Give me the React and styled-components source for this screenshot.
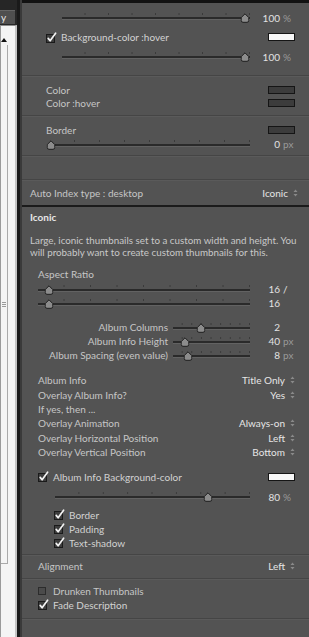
import React from 'react';
import styled, { createGlobalStyle } from 'styled-components';

const GlobalStyle = createGlobalStyle`
  html, body {
    margin: 0;
    padding: 0;
    background: #535353;
  }
  body {
    font-family: Lato, "Liberation Sans", sans-serif;
    font-size: 10px;
    color: #c8c8c8;
  }
`;

const Page = styled.div`
  display: flex;
  width: 309px;
  height: 637px;
  overflow: hidden;
`;

/* left window edge: list scrollbar and frame */
const Strip = styled.div`
  display: flex;
  flex-direction: column;
  width: 17px;
  background: #262626;
`;

const TabButton = styled.div`
  height: 14px;
  margin-top: 10px;
  width: 15px;
  background: #4f4f4f;
  border-top: 1px solid #666;
  box-sizing: border-box;
  color: #e8e8e8;
  font-size: 10px;
  line-height: 12px;
  overflow: hidden;
  padding-left: 1px;
`;

const ListArea = styled.div`
  flex: 1;
  display: flex;
  flex-direction: column;
  margin-top: 1px;
  background: #f4f4f4;
  border-top: 1px solid #8c8c8c;
  border-left: 1px solid #9a9a9a;
  border-right: 2px solid #c4c4c4;
  padding-top: 8px;
`;

const ScrollArrow = styled.div`
  display: flex;
  align-items: center;
  height: 11px;
  width: 7px;
`;

const ScrollThumb = styled.div`
  display: flex;
  align-items: center;
  justify-content: center;
  width: 6px;
  height: 518px;
  border-right: 1px solid #a9a9a9;
  border-bottom: 1px solid #a9a9a9;
`;

const Grip = styled.div`
  width: 4px;
  height: 5px;
  background: repeating-linear-gradient(to bottom, #9a9a9a 0, #9a9a9a 1px, transparent 1px, transparent 2px);
`;

const Frame = styled.div`
  width: 2px;
  background: #3a3a3a;
  border-left: 3px solid #1a1a1a;
`;

const Panel = styled.div`
  flex: 1;
  display: flex;
  flex-direction: column;
  background: #535353;
  border-top: 3px solid #121212;
`;

const Section = styled.div`
  display: flex;
  flex-direction: column;
  min-height: ${p => p.$minH || 0}px;
  padding: ${p => p.$pt || 0}px 0 ${p => p.$pb || 0}px;
  border-bottom: ${p => (p.$heavy ? '2px solid #1b1b1b' : '1px solid #454545')};
  box-shadow: ${p => (p.$heavy ? 'none' : '0 1px 0 #5a5a5a')};
`;

const Row = styled.div`
  display: flex;
  align-items: center;
  height: ${p => p.$h || 14}px;
  margin-top: ${p => p.$mt || 0}px;
  padding: 0 14px 0 ${p => (p.$indent ?? 16)}px;
  white-space: nowrap;
`;

const Label = styled.span`
  color: ${p => p.$color || '#c6c6c6'};
`;

const RightLabel = styled.span`
  width: ${p => p.$w}px;
  text-align: right;
  color: #c6c6c6;
  flex-shrink: 0;
`;

const Heading = styled.div`
  padding-left: 8px;
  margin-top: 4px;
  height: 13px;
  line-height: 13px;
  font-weight: 700;
  color: #e6e6e6;
`;

const Desc = styled.p`
  margin: 10px 0 0;
  padding-left: 8px;
  font-size: 9.8px;
  line-height: 12px;
  color: #c8c8c8;
  white-space: nowrap;
`;

const SliderWrap = styled.div`
  position: relative;
  flex: 1;
  height: 11px;
  margin-left: ${p => p.$ml || 0}px;
  margin-right: 7px;

  &::before {
    content: '';
    position: absolute;
    left: 0;
    right: 0;
    top: 1px;
    height: 2px;
    background-image: linear-gradient(to right, transparent calc(100% - 1px), #3a3a3a calc(100% - 1px));
    background-size: 12.5% 100%;
    background-repeat: repeat-x;
  }

  &::after {
    content: '';
    position: absolute;
    left: 0;
    right: 0;
    top: 5px;
    height: 2px;
    background: #2a2a2a;
    box-shadow: 0 1px 0 #626262;
  }
`;

const ThumbPos = styled.div`
  position: absolute;
  top: 1px;
  width: 9px;
  height: 10px;
  transform: translateX(-50%);
  z-index: 1;
  line-height: 0;
`;

const Value = styled.div`
  display: flex;
  width: 38px;
  flex-shrink: 0;
  color: #e2e2e2;
`;

const Num = styled.span`
  width: 23px;
  text-align: right;
`;

const Unit = styled.span`
  margin-left: 3px;
  color: ${p => p.$color || '#9a9a9a'};
`;

const Swatch = styled.div`
  margin-left: auto;
  width: 27px;
  height: 8px;
  box-sizing: border-box;
  border: 1px solid #151515;
  background: ${p => p.$fill};
`;

const Select = styled.div`
  margin-left: auto;
  margin-right: ${p => p.$mr || 0}px;
  display: flex;
  align-items: center;
  gap: 5px;
  color: #e6e6e6;
`;

const BoxSvg = styled.svg`
  flex-shrink: 0;
  margin-right: 4px;
`;

const Thumb = () => (
  <svg width="9" height="10" viewBox="0 0 9 10">
    <path
      d="M4.5 0.8 L8.3 4.6 V7.4 Q8.3 9.3 6.5 9.3 H2.5 Q0.7 9.3 0.7 7.4 V4.6 Z"
      fill="#8c8c8c"
      stroke="#1e1e1e"
      strokeWidth="1"
    />
  </svg>
);

const Slider = ({ pos, ml }) => (
  <SliderWrap $ml={ml}>
    <ThumbPos style={{ left: `${pos}%` }}>
      <Thumb />
    </ThumbPos>
  </SliderWrap>
);

const Checkbox = ({ on }) => (
  <BoxSvg width="11" height="11" viewBox="0 0 11 11">
    <rect
      x="0.5"
      y="2.5"
      width={on ? 8 : 7}
      height={on ? 8 : 7}
      fill={on ? '#3d3d3d' : '#4b4b4b'}
      stroke={on ? '#1a1a1a' : '#2c2c2c'}
    />
    {on && (
      <path
        d="M2.2 6.4 L4.1 8.8 L9.6 1.2"
        fill="none"
        stroke="#f2f2f2"
        strokeWidth="1.7"
        strokeLinecap="round"
        strokeLinejoin="round"
      />
    )}
  </BoxSvg>
);

const UpDown = () => (
  <svg width="5" height="8" viewBox="0 0 5 8">
    <path d="M0.5 3 L2.5 0.6 L4.5 3 Z M0.5 5 L2.5 7.4 L4.5 5 Z" fill="#8a8a8a" />
  </svg>
);

const Val = ({ n, unit, unitColor }) => (
  <Value>
    <Num>{n}</Num>
    {unit && <Unit $color={unitColor}>{unit}</Unit>}
  </Value>
);

const Choice = ({ children, mr }) => (
  <Select $mr={mr}>
    {children}
    <UpDown />
  </Select>
);

const albumSliders = [
  { label: 'Album Columns', pos: 36, n: '2' },
  { label: 'Album Info Height', pos: 15, n: '40', unit: 'px' },
  { label: 'Album Spacing (even value)', pos: 19, n: '8', unit: 'px' },
];

const overlayRows = [
  ['Album Info', 'Title Only'],
  ['Overlay Album Info?', 'Yes'],
  ['If yes, then ...', null],
  ['Overlay Animation', 'Always-on'],
  ['Overlay Horizontal Position', 'Left'],
  ['Overlay Vertical Position', 'Bottom'],
];

export default function App() {
  return (
    <>
      <GlobalStyle />
      <Page>
        <Strip>
          <TabButton>y</TabButton>
          <ListArea>
            <ScrollArrow>
              <svg width="6" height="4" viewBox="0 0 6 4">
                <path d="M0 4 L3 0 L6 4 Z" fill="#111" />
              </svg>
            </ScrollArrow>
            <ScrollThumb>
              <Grip />
            </ScrollThumb>
          </ListArea>
        </Strip>
        <Frame />
        <Panel>
          <Section $pt={7} $pb={11}>
            <Row $h={15} $indent={40}>
              <Slider pos={97.3} />
              <Val n="100" unit="%" />
            </Row>
            <Row $h={24} $indent={24}>
              <Checkbox on />
              <Label $color="#d2d2d2">Background-color :hover</Label>
              <Swatch $fill="#f7f7f7" />
            </Row>
            <Row $h={15} $indent={40}>
              <Slider pos={97.3} />
              <Val n="100" unit="%" />
            </Row>
          </Section>

          <Section $pt={7} $pb={6}>
            <Row $h={13} $indent={24}>
              <Label>Color</Label>
              <Swatch $fill="#3c3c3c" />
            </Row>
            <Row $h={13} $indent={24}>
              <Label>Color :hover</Label>
              <Swatch $fill="#3c3c3c" />
            </Row>
          </Section>

          <Section $pt={7} $pb={4}>
            <Row $h={14} $indent={24}>
              <Label>Border</Label>
              <Swatch $fill="#3c3c3c" />
            </Row>
            <Row $h={14} $indent={28}>
              <Slider pos={0.5} />
              <Val n="0" unit="px" />
            </Row>
          </Section>

          <Section $minH={23} />

          <Section $heavy>
            <Row $h={25} $indent={8}>
              <Label>Auto Index type : desktop</Label>
              <Choice mr={-3}>Iconic</Choice>
            </Row>
          </Section>

          <Section $pb={4}>
            <Heading>Iconic</Heading>
            <Desc>
              Large, iconic thumbnails set to a custom width and height. You
              <br />
              will probably want to create custom thumbnails for this.
            </Desc>
            <Row $mt={9}>
              <Label>Aspect Ratio</Label>
            </Row>
            <Row $mt={1}>
              <Slider pos={5.4} />
              <Val n="16" unit="/" unitColor="#e2e2e2" />
            </Row>
            <Row>
              <Slider pos={5.4} />
              <Val n="16" />
            </Row>

            {albumSliders.map((s, i) => (
              <Row key={s.label} $mt={i === 0 ? 10 : 0}>
                <RightLabel $w={130}>{s.label}</RightLabel>
                <Slider pos={s.pos} ml={5} />
                <Val n={s.n} unit={s.unit} />
              </Row>
            ))}

            {overlayRows.map(([label, value], i) => (
              <Row key={label} $h={14.4} $mt={i === 0 ? 11 : 0}>
                <Label>{label}</Label>
                {value && <Choice>{value}</Choice>}
              </Row>
            ))}

            <Row $h={16} $mt={9.6}>
              <Checkbox on />
              <Label $color="#d2d2d2">Album Info Background-color</Label>
              <Swatch $fill="#f7f7f7" />
            </Row>
            <Row $mt={5} $indent={33}>
              <Slider pos={78.5} />
              <Val n="80" unit="%" />
            </Row>
            <Row $mt={4} $indent={32}>
              <Checkbox on />
              <Label $color="#d2d2d2">Border</Label>
            </Row>
            <Row $indent={32}>
              <Checkbox on />
              <Label $color="#d2d2d2">Padding</Label>
            </Row>
            <Row $indent={32}>
              <Checkbox on />
              <Label $color="#d2d2d2">Text-shadow</Label>
            </Row>
          </Section>

          <Section>
            <Row $h={23}>
              <Label>Alignment</Label>
              <Choice>Left</Choice>
            </Row>
          </Section>

          <Section $pt={5} $pb={6}>
            <Row>
              <Checkbox />
              <Label>Drunken Thumbnails</Label>
            </Row>
            <Row>
              <Checkbox on />
              <Label $color="#d2d2d2">Fade Description</Label>
            </Row>
          </Section>
        </Panel>
      </Page>
    </>
  );
}
